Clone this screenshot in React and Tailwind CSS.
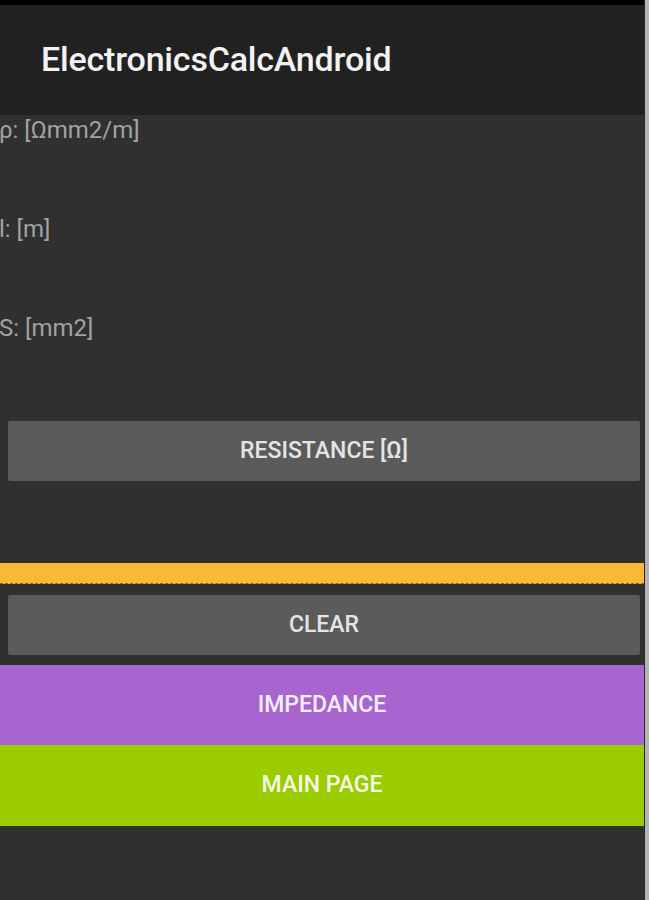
import React from 'react';

const labels = ['ρ: [Ωmm2/m]', 'l: [m]', 'S: [mm2]'];

function App() {
  return (
    <div className="flex h-[900px] w-[649px] bg-[#b4b4b4]" style={{ fontFamily: 'Roboto, "Noto Sans", sans-serif' }}>
      <div className="flex w-[644px] flex-col bg-[#303030]">
        <div className="h-[5px] bg-black" />
        {/* action bar */}
        <div className="flex h-[110px] items-center bg-[#212121] pl-[41px] pb-[2px]">
          <h1 className="text-[34px] font-medium tracking-[-0.2px] text-[#f2f2f2]">ElectronicsCalcAndroid</h1>
        </div>

        {labels.map((label) => (
          <div key={label} className="h-[99px]">
            <p className="-ml-px text-[24px] leading-[30px] text-[#a2a2a2]">{label}</p>
          </div>
        ))}

        <button className="ml-2 mr-[4px] mt-[9px] h-[60px] rounded-[2px] bg-[#5b5b5c] text-[23px] font-medium text-[#e4e4e4]">
          RESISTANCE [Ω]
        </button>

        <div className="mt-[82px] h-[21px] border-b border-dashed border-[#7a6a3a] bg-[#fbb832]" />

        <button className="ml-2 mr-[4px] mt-[11px] h-[60px] rounded-[2px] bg-[#5b5b5c] text-[23px] font-medium text-[#e4e4e4]">
          CLEAR
        </button>

        <button className="mt-[10px] h-[80px] bg-[#a865cf] text-[23px] font-medium text-[#f4eefa]">
          IMPEDANCE
        </button>
        <button className="h-[81px] bg-[#9acc00] text-[23px] font-medium text-[#f4f9e4]">
          MAIN PAGE
        </button>
      </div>
      <div className="w-px bg-[#262626]" />
    </div>
  );
}

export default App;
